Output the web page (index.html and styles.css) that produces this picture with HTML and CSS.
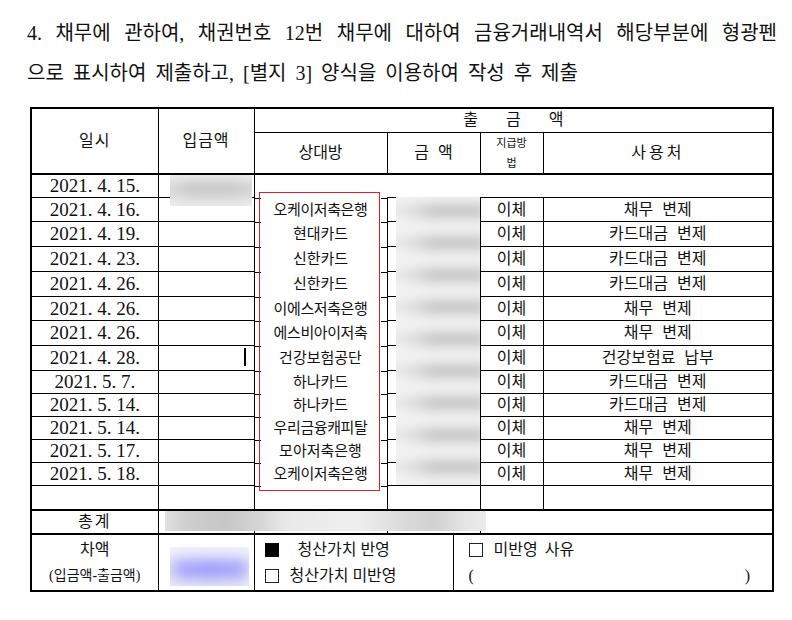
FILE: index.html
```html
<!DOCTYPE html>
<html lang="ko">
<head>
<meta charset="utf-8">
<title>채무 금융거래내역</title>
<link rel="stylesheet" href="styles.css">
</head>
<body>
<div class="page">
  <p class="intro">
    <span class="line1">4. 채무에 관하여, 채권번호 12번 채무에 대하여 금융거래내역서 해당부분에 형광펜</span>
    <span class="line2">으로 표시하여 제출하고, [별지 3] 양식을 이용하여 작성 후 제출</span>
  </p>
  <div class="sheet">
    <table class="ledger">
      <colgroup>
        <col class="c1"><col class="c2"><col class="c3"><col class="c4"><col class="c5"><col class="c6">
      </colgroup>
      <thead>
        <tr class="hr1"><th rowspan="2" class="hd-date">일시</th><th rowspan="2" class="hd-in">입금액</th><th colspan="4" class="hd-out">출 금 액</th></tr>
        <tr class="hr2"><th>상대방</th><th class="hd-amt">금 액</th><th class="hd-method">지급방<br>법</th><th class="hd-use">사용처</th></tr>
      </thead>
      <tbody>
        <tr class="h24 first"><td class="date">2021. 4. 15.</td><td></td><td colspan="4" class="merged"></td></tr>
        <tr class="h24"><td class="date">2021. 4. 16.</td><td></td><td class="hl name tight">오케이저축은행</td><td></td><td>이체</td><td class="use">채무 변제</td></tr>
        <tr class="h25"><td class="date">2021. 4. 19.</td><td></td><td class="hl name">현대카드</td><td></td><td>이체</td><td class="use">카드대금 변제</td></tr>
        <tr class="h25"><td class="date">2021. 4. 23.</td><td></td><td class="hl name">신한카드</td><td></td><td>이체</td><td class="use">카드대금 변제</td></tr>
        <tr class="h25"><td class="date">2021. 4. 26.</td><td></td><td class="hl name">신한카드</td><td></td><td>이체</td><td class="use">카드대금 변제</td></tr>
        <tr class="h24"><td class="date">2021. 4. 26.</td><td></td><td class="hl name tight">이에스저축은행</td><td></td><td>이체</td><td class="use">채무 변제</td></tr>
        <tr class="h25"><td class="date">2021. 4. 26.</td><td></td><td class="hl name tight">에스비아이저축</td><td></td><td>이체</td><td class="use">채무 변제</td></tr>
        <tr class="h25"><td class="date">2021. 4. 28.</td><td></td><td class="hl name">건강보험공단</td><td></td><td>이체</td><td class="use">건강보험료 납부</td></tr>
        <tr class="h23"><td class="date">2021. 5. 7.</td><td></td><td class="hl name">하나카드</td><td></td><td>이체</td><td class="use">카드대금 변제</td></tr>
        <tr class="h23"><td class="date">2021. 5. 14.</td><td></td><td class="hl name">하나카드</td><td></td><td>이체</td><td class="use">카드대금 변제</td></tr>
        <tr class="h23"><td class="date">2021. 5. 14.</td><td></td><td class="hl name tight">우리금융캐피탈</td><td></td><td>이체</td><td class="use">채무 변제</td></tr>
        <tr class="h23"><td class="date">2021. 5. 17.</td><td></td><td class="hl name">모아저축은행</td><td></td><td>이체</td><td class="use">채무 변제</td></tr>
        <tr class="h23"><td class="date">2021. 5. 18.</td><td></td><td class="hl name tight">오케이저축은행</td><td></td><td>이체</td><td class="use">채무 변제</td></tr>
        <tr class="h24"><td></td><td></td><td class="hl-end"></td><td></td><td></td><td></td></tr>
        <tr class="h24 total"><td class="sum">총계</td><td></td><td></td><td></td><td colspan="2"></td></tr>
        <tr class="diff">
          <td class="difflabel"><div>차액</div><div class="small">(입금액-출금액)</div></td>
          <td></td>
          <td colspan="4" class="opts">
            <div class="optwrap">
              <div class="optl">
                <div class="opt"><span class="box filled"></span><span class="gap-wide">청산가치 반영</span></div>
                <div class="opt"><span class="box"></span><span class="gap">청산가치 미반영</span></div>
              </div>
              <div class="optr">
                <div class="opt"><span class="box"></span><span class="gap">미반영 사유</span></div>
                <div class="opt paren"><span>(</span><span>)</span></div>
              </div>
            </div>
          </td>
        </tr>
      </tbody>
    </table>
    <div class="blur blur-in"></div>
    <div class="blur blur-amt"></div>
    <div class="blur blur-total"></div>
    <div class="blur blur-diff"></div>
    <div class="redbox"></div>
    <div class="caret"></div>
  </div>
</div>
</body>
</html>
```

FILE: styles.css
```css
* { box-sizing: border-box; }
html, body { margin: 0; padding: 0; background: #fff; }
body {
  font-family: "Liberation Serif", "Noto Sans CJK KR", serif;
  color: #111;
}
.page { padding-top: 13px; }

.intro {
  margin: 0 0 14px 27px;
  width: 750px;
  font-size: 20px;
  line-height: 40px;
}
.line1 { display: block; text-align: justify; text-align-last: justify; }
.line2 { display: block; word-spacing: 4px; }

.sheet { position: relative; margin-left: 30px; width: 742px; }

.ledger {
  width: 742px;
  table-layout: fixed;
  border-collapse: collapse;
  border: 2px solid #000;
  font-size: 16px;
}
.c1 { width: 127px; }
.c2 { width: 96px; }
.c3 { width: 133px; }
.c4 { width: 93px; }
.c5 { width: 63px; }
.c6 { width: 230px; }

.ledger th, .ledger td {
  border: 1px solid #000;
  padding: 0;
  text-align: center;
  vertical-align: middle;
  font-weight: normal;
  line-height: 20px;
  white-space: nowrap;
}
.hr1 { height: 24px; }
.hr2 { height: 38px; }
.h25 { height: 25px; }
.h24 { height: 24px; }
.h23 { height: 23px; }
.diff { height: 56px; }

.hd-date { letter-spacing: 1px; }
.hd-in { letter-spacing: 1px; }
.hd-out { word-spacing: 24px; }
.hd-amt { word-spacing: 5px; }
.hd-method { font-size: 11px; line-height: 19px; }
.hd-use { letter-spacing: 3px; }

.first td { border-top: 2px solid #000; }
.ledger td.merged { border-bottom: none; }

.date { font-size: 19px; }
.name { font-size: 15px; }
.tight { letter-spacing: -0.4px; }
.use { word-spacing: 5px; }

.ledger td.hl {
  border-top: none;
  border-bottom: none;
  background:
    linear-gradient(#000, #000) left top / 6px 1px no-repeat,
    linear-gradient(#000, #000) right top / 6px 1px no-repeat;
}
.ledger td.hl-end {
  border-top: none;
  background:
    linear-gradient(#000, #000) left top / 6px 1px no-repeat,
    linear-gradient(#000, #000) right top / 6px 1px no-repeat;
}

.total td { border-top: 2px solid #000; }
.sum { letter-spacing: 2px; }

.diff td { border-top: 2px solid #000; vertical-align: top; }
.difflabel { padding-top: 2px !important; line-height: 26px !important; }
.difflabel .small { font-size: 14px; }

.ledger td.opts { text-align: left; }
.optwrap { display: flex; height: 55px; }
.optl {
  width: 199px;
  border-right: 1px solid #000;
  padding: 2px 0 0 10px;
}
.optr { flex: 1; padding: 2px 22px 0 15px; }
.opt { display: flex; align-items: center; height: 26px; line-height: 26px; }
.box {
  display: inline-block;
  width: 14px;
  height: 14px;
  border: 1px solid #222;
  flex: none;
}
.box.filled { background: #000; border-color: #000; }
.gap-wide { margin-left: 19px; }
.gap { margin-left: 11px; }
.optr .gap { word-spacing: 3px; }
.paren { justify-content: space-between; }

.blur { position: absolute; overflow: hidden; background: #f2f2f2; }
.blur::before {
  content: "";
  position: absolute;
  inset: -8px;
  filter: blur(4px);
}
.blur-in { left: 140px; top: 68px; width: 82px; height: 31px; }
.blur-in::before {
  background:
    linear-gradient(to right, rgba(242,242,242,0.5), transparent 30%, transparent 70%, rgba(242,242,242,0.4)),
    linear-gradient(to bottom, #ececec 0, #ececec 20%, #c6c6c6 40%, #cdcdcd 55%, #e9e9e9 78%, #f2f2f2 100%);
}
.blur-amt { left: 366px; top: 90px; width: 84px; height: 288px; }
.blur-amt::before {
  background:
    linear-gradient(to right, rgba(244,244,244,0.85) 0, rgba(244,244,244,0.5) 25%, transparent 45%, transparent 90%, rgba(244,244,244,0.6) 100%),
    repeating-linear-gradient(to bottom, #eeeeee 0, #eeeeee 13px, #c9c9c9 18px, #c9c9c9 26px, #eeeeee 32px);
}
.blur-total { left: 135px; top: 404px; width: 321px; height: 20px; }
.blur-total::before {
  background:
    linear-gradient(to right, #e8e8e8 0, #cfcfcf 8%, #c6c6c6 20%, #d4d4d4 30%, #e9e9e9 38%, #efefef 60%, #dcdcdc 72%, #d0d0d0 82%, #e6e6e6 92%, #ededed 100%);
}
.blur-diff { left: 140px; top: 440px; width: 79px; height: 39px; background: #f3f3f6; }
.blur-diff::before {
  background:
    linear-gradient(to right, rgba(243,243,248,0.9) 0, rgba(243,243,248,0.1) 22%, transparent 50%, rgba(243,243,248,0.1) 80%, rgba(243,243,248,0.9) 100%),
    linear-gradient(to bottom, #f2f2f8 0, #ececfb 25%, #a9a9fb 45%, #9c9cf9 60%, #d4d4f8 78%, #efefef 100%);
}

.redbox {
  position: absolute;
  left: 229px;
  top: 85px;
  width: 121px;
  height: 299px;
  border: 1px solid #e0202a;
  pointer-events: none;
}
.caret {
  position: absolute;
  left: 214px;
  top: 241px;
  width: 2px;
  height: 18px;
  background: #000;
}
```
